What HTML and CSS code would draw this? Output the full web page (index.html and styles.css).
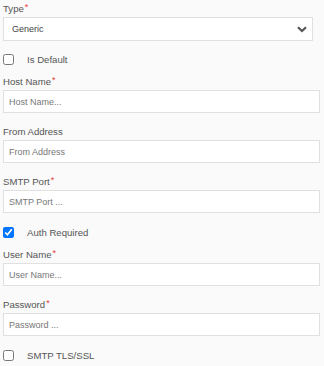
FILE: index.html
```html
<!DOCTYPE html>
<html lang="en">
<head>
    <meta charset="UTF-8">
    <meta name="viewport" content="width=device-width, initial-scale=1.0">
    <title>SMTP Settings</title>
    <link rel="stylesheet" href="styles.css">
</head>
<body>
    <form class="smtp-form">
        <div class="field">
            <label class="label">Type<span class="req">*</span></label>
            <div class="select-wrap">
                <select class="select">
                    <option>Generic</option>
                </select>
                <svg class="chevron" width="10" height="7" viewBox="0 0 10 7">
                    <path d="M1 1.2 L5 5 L9 1.2" fill="none" stroke="#555" stroke-width="2.2"/>
                </svg>
            </div>
        </div>

        <div class="check first">
            <input type="checkbox" id="is-default">
            <label for="is-default">Is Default</label>
        </div>

        <div class="field">
            <label class="label">Host Name<span class="req">*</span></label>
            <input class="input" type="text" placeholder="Host Name...">
        </div>

        <div class="field">
            <label class="label">From Address</label>
            <input class="input" type="text" placeholder="From Address">
        </div>

        <div class="field">
            <label class="label">SMTP Port<span class="req">*</span></label>
            <input class="input" type="text" placeholder="SMTP Port ...">
        </div>

        <div class="check">
            <input type="checkbox" id="auth" checked>
            <label for="auth">Auth Required</label>
        </div>

        <div class="field">
            <label class="label">User Name<span class="req">*</span></label>
            <input class="input" type="text" placeholder="User Name...">
        </div>

        <div class="field">
            <label class="label">Password<span class="req">*</span></label>
            <input class="input" type="password" placeholder="Password ...">
        </div>

        <div class="check">
            <input type="checkbox" id="tls">
            <label for="tls">SMTP TLS/SSL</label>
        </div>
    </form>
</body>
</html>
```

FILE: styles.css
```css
body {
    margin: 0;
    padding: 2px 4px 0 3px;
    background: #fafafa;
    font-family: "Liberation Sans", Arial, sans-serif;
    color: #555;
}
.field {
    margin-bottom: 12px;
}
.label {
    display: block;
    font-size: 9.6px;
    line-height: 14px;
    margin-bottom: 1px;
    color: #555;
}
.req {
    color: #e53935;
    font-size: 9px;
    position: relative;
    top: -2px;
    margin-left: 1px;
}
.input,
.select {
    display: block;
    box-sizing: border-box;
    width: 100%;
    height: 23px;
    margin: 0;
    padding: 0 5px;
    border: 1px solid #e0e0e0;
    border-radius: 0;
    background: #fff;
    font-family: "Liberation Sans", Arial, sans-serif;
    font-size: 9px;
    color: #444;
    outline: none;
}
.input::placeholder {
    color: #777;
}
.select-wrap {
    position: relative;
    width: 310px;
}
.select {
    appearance: none;
    -webkit-appearance: none;
    height: 24px;
    padding-left: 8px;
}
.chevron {
    position: absolute;
    right: 6px;
    top: 9px;
    pointer-events: none;
}
.check {
    display: flex;
    align-items: center;
    height: 14px;
    margin-bottom: 9px;
    font-size: 9.6px;
    color: #555;
}
.check.first {
    margin-top: -1px;
}
.check input {
    width: 11px;
    height: 11px;
    margin: 0 13px 0 0;
}
```
